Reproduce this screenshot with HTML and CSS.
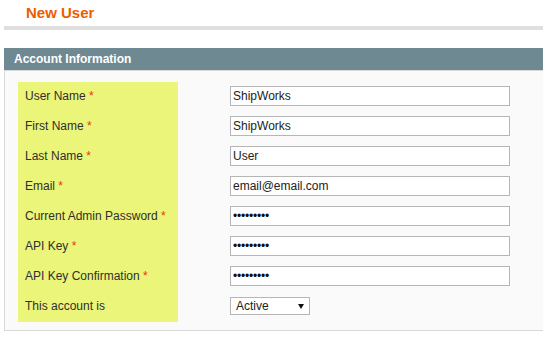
FILE: index.html
```html
<!DOCTYPE html>
<html lang="en">
<head>
<meta charset="utf-8">
<title>New User</title>
<link rel="stylesheet" href="styles.css">
</head>
<body>
<div class="page-title"><h1>New User</h1></div>
<div class="title-rule"></div>
<section class="fieldset">
  <h2 class="fieldset-head">Account Information</h2>
  <div class="fieldset-body">
    <div class="form-grid">
      <label class="lbl">User Name <span class="req">*</span></label>
      <div class="val"><input class="txt" type="text" value="ShipWorks"></div>
      <label class="lbl">First Name <span class="req">*</span></label>
      <div class="val"><input class="txt" type="text" value="ShipWorks"></div>
      <label class="lbl">Last Name <span class="req">*</span></label>
      <div class="val"><input class="txt" type="text" value="User"></div>
      <label class="lbl">Email <span class="req">*</span></label>
      <div class="val"><input class="txt" type="text" value="email@email.com"></div>
      <label class="lbl">Current Admin Password <span class="req">*</span></label>
      <div class="val"><input class="txt pw" type="password" value="123456789"></div>
      <label class="lbl">API Key <span class="req">*</span></label>
      <div class="val"><input class="txt pw" type="password" value="123456789"></div>
      <label class="lbl">API Key Confirmation <span class="req">*</span></label>
      <div class="val"><input class="txt pw" type="password" value="123456789"></div>
      <label class="lbl">This account is</label>
      <div class="val">
        <span class="select-wrap">
          <select class="sel">
            <option>Active</option>
            <option>Inactive</option>
          </select>
        </span>
      </div>
    </div>
  </div>
</section>
</body>
</html>
```
FILE: styles.css
```css
* { box-sizing: border-box; }
html, body { margin: 0; padding: 0; background: #fff; }
body {
  font-family: "Liberation Sans", Arial, sans-serif;
  font-size: 12px;
  color: #2f2f2f;
  overflow: hidden;
}
.page-title {
  height: 26px;
  padding-left: 26px;
}
.page-title h1 {
  margin: 0;
  font-size: 15px;
  line-height: 26px;
  font-weight: bold;
  color: #eb5e00;
}
.title-rule {
  margin-left: 4px;
  height: 4px;
  background: #dfdfdf;
}
.fieldset {
  margin: 18px 0 0 4px;
}
.fieldset-head {
  margin: 0;
  height: 22px;
  line-height: 22px;
  padding-left: 10px;
  background: #6f8992;
  color: #fff;
  font-size: 12px;
  font-weight: bold;
}
.fieldset-body {
  background: #fafafa;
  border: 1px solid #d9d9d9;
  border-right: 0;
  padding: 11px 0 8px 13px;
}
.form-grid {
  display: grid;
  grid-template-columns: 160px 280px;
  grid-auto-rows: 30px;
  column-gap: 52px;
}
.lbl {
  background: #ebf57a;
  padding: 7px 0 0 7px;
  line-height: 14px;
  white-space: nowrap;
}
.req { color: #eb340a; }
.val { padding-top: 4px; }
.txt {
  display: block;
  width: 280px;
  height: 20px;
  margin: 0;
  padding: 0 2px;
  border: 1px solid #b6b6b6;
  background: #fff;
  font-family: "Liberation Sans", Arial, sans-serif;
  font-size: 12px;
  color: #222;
  outline: none;
}
.pw { font-size: 12px; letter-spacing: -0.2px; color: #111; }
.select-wrap {
  position: relative;
  display: inline-block;
  margin-top: 1px;
}
.sel {
  -webkit-appearance: none;
  appearance: none;
  display: block;
  width: 80px;
  height: 18px;
  margin: 0;
  padding: 0 0 0 5px;
  border: 1px solid #b6b6b6;
  border-radius: 0;
  background: #fff;
  font-family: "Liberation Sans", Arial, sans-serif;
  font-size: 12px;
  line-height: 16px;
  color: #222;
  outline: none;
}
.select-wrap::after {
  content: "";
  position: absolute;
  left: 68px;
  top: 7px;
  border-left: 3px solid transparent;
  border-right: 3px solid transparent;
  border-top: 5px solid #111;
  pointer-events: none;
}
```
